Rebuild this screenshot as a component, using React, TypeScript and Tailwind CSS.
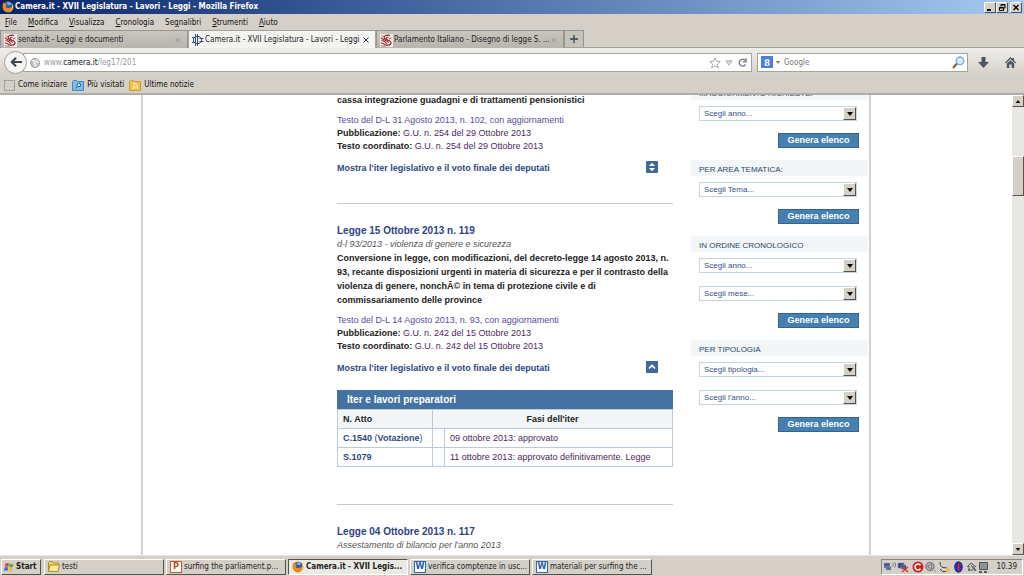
import type { ReactNode } from 'react';

const raised = 'border border-t-white border-l-white border-r-[#55524c] border-b-[#55524c] bg-[#d4d0c8]';

function FirefoxIcon() {
  return (
    <svg viewBox="0 0 12 12" className="size-3 shrink-0" aria-hidden="true">
      <circle cx="6" cy="6" r="5.4" fill="#e2701c" />
      <circle cx="6.4" cy="5" r="3.9" fill="#2d5fa8" />
      <path d="M5 1.6c1.6-.6 3.4 0 4.3 1.4L7 4.2 5.2 3z" fill="#7db4e6" />
      <path d="M.7 3.2C1 2.4 1.6 1.8 2 1.6c0 .8.5 1.3 1.2 1.5.5 0 1.3 0 1.7.3-.2.6-1 .9-1.2 1.5.2 1.6 1.7 2.6 3.4 2.2 1.3-.2 2-.8 3-1.3-.3 2.5-2 4.6-4.3 4.8C2.800 11 .3 8 .7 3.2z" fill="#ee8a1e" />
      <path d="M10.3 2.6c1.2 1.7 1.5 4 .3 6-.8 1.5-2.3 2.6-4 2.8 2.3-1.300 4-3.400 3.700-8.800z" fill="#f8c83a" />
    </svg>
  );
}

function SenateIcon() {
  return (
    <svg viewBox="0 0 13 13" className="size-[13px] shrink-0" fill="none" aria-hidden="true">
      <rect width="13" height="13" fill="#f4ecea" />
      <path d="M10 1.500C7 .8 4 1.500 4 3.500S10.500 6 11 8.500 8 11.500 6 11" stroke="#8c1c22" strokeWidth="1.200" />
      <path d="M8.500 3.500C6.500 2.800 6 4 7 4.800M1 3.500C2 6 7 6 8.500 8.500M1.500 6.500C4 7 6 8 6.500 9.800M1 9c2 0 3.500 1.500 5 2" stroke="#a02a2e" strokeWidth="1.200" />
      <path d="M1.500 1l2.500 2M11.500 4l-2.500 1M1 11.800c2 .4 3.500.6 5 .2" stroke="#b5575a" />
    </svg>
  );
}

function CameraIcon() {
  return (
    <svg viewBox="0 0 12 12" className="size-3 shrink-0" fill="none" stroke="#2f4f96" aria-hidden="true">
      <path d="M3.500 0v12M5.500 0v12M3.500 2.500h3.500c3.500 1 3.500 6 0 7H3.500M0 3.500h3.500M0 8.500h3.500M7.500 4.500h4M7.500 7.500h4M1.500 3.500v5" />
    </svg>
  );
}

function FolderIcon() {
  return (
    <svg viewBox="0 0 12 11" className="h-[11px] w-3 shrink-0" aria-hidden="true">
      <path d="M.5 9.500v-8L1.500.5h3l1 1.500h5v2" fill="#f2d16b" stroke="#b08a2b" />
      <path d="M.5 10.500L2 4h9.500L10 10.500z" fill="#fbe89a" stroke="#b08a2b" />
    </svg>
  );
}

function OfficeIcon({ kind }: { kind: 'P' | 'W' }) {
  const word = kind === 'W';
  return (
    <span
      className={`flex size-3 shrink-0 items-center justify-center border bg-white text-[9px] leading-none font-bold ${
        word ? 'border-[#2e69b3] text-[#1f5aa8]' : 'border-[#d0562c] text-[#cc4a1c]'
      }`}
      aria-hidden="true"
    >
      {kind}
    </span>
  );
}

function Tab({ icon, title, active = false }: { icon: ReactNode; title: string; active?: boolean }) {
  return (
    <div
      className={`flex h-[18px] w-[188px] items-center gap-px border border-b-0 pt-px pr-1.5 pl-[3px] ${
        active ? 'border-[#a5a29a] bg-[#f4f4f1]' : 'border-[#98958e] bg-linear-to-b from-[#cac6be] to-[#b8b5ae]'
      }`}
    >
      {icon}
      <button type="button" className="min-w-0 flex-1 overflow-hidden text-left whitespace-nowrap text-[#222]">
        {title}
      </button>
      <button type="button" aria-label={`Chiudi ${title}`} className={active ? 'text-[#333]' : 'text-[#999]'}>
        <svg viewBox="0 0 6 6" className="size-1.5" stroke="currentColor" aria-hidden="true">
          <path d="M.5.5l5 5M5.500.5l-5 5" />
        </svg>
      </button>
    </div>
  );
}

function Browser() {
  return (
    <header className="shrink-0 bg-[#d4d0c8]">
      <div className="flex h-[14px] items-center justify-between bg-linear-to-r from-[#0a246a] to-[#a6caf0] px-0.5">
        <div className="flex items-center gap-px font-bold text-white">
          <FirefoxIcon />
          Camera.it - XVII Legislatura - Lavori - Leggi - Mozilla Firefox
        </div>
        <div className="flex">
          <button type="button" aria-label="Riduci" className={`flex h-[11px] w-3 items-center justify-center ${raised}`}>
            <svg viewBox="0 0 8 7" className="h-[7px] w-2" aria-hidden="true">
              <path d="M1 5h4v2H1z" />
            </svg>
          </button>
          <button type="button" aria-label="Ripristina" className={`flex h-[11px] w-3 items-center justify-center ${raised}`}>
            <svg viewBox="0 0 8 7" className="h-[7px] w-2" fill="none" stroke="#000" aria-hidden="true">
              <path d="M3 2.500V.5h4v3.500H5.500M1.500 3.500h4v3h-4zM3 1h4M1.500 4h4" />
            </svg>
          </button>
          <button type="button" aria-label="Chiudi" className={`ml-0.5 flex h-[11px] w-3 items-center justify-center ${raised}`}>
            <svg viewBox="0 0 8 7" className="h-[7px] w-2" stroke="#000" strokeWidth="1.300" aria-hidden="true">
              <path d="M1.500 1l5 5M6.500 1l-5 5" />
            </svg>
          </button>
        </div>
      </div>

      <nav className="flex h-4 items-center gap-[11px] px-[5px] pt-0.5 text-[#111]">
        {['File', 'Modifica', 'Visualizza', 'Cronologia', 'Segnalibri', 'Strumenti', 'Aiuto'].map((m) => (
          <button key={m} type="button">
            {m === 'Segnalibri' ? (
              <>
                Se<u>g</u>nalibri
              </>
            ) : (
              <>
                <u>{m[0]}</u>
                {m.slice(1)}
              </>
            )}
          </button>
        ))}
      </nav>

      <div className="flex h-[18px] border-b border-[#a5a29a]">
        <Tab icon={<SenateIcon />} title="senato.it - Leggi e documenti" />
        <Tab icon={<CameraIcon />} title="Camera.it - XVII Legislatura - Lavori - Leggi" active />
        <Tab icon={<SenateIcon />} title="Parlamento Italiano - Disegno di legge S. ..." />
        <button
          type="button"
          aria-label="Nuova scheda"
          className="flex w-5 items-center justify-center border border-b-0 border-[#98958e] bg-[#c6c3bb]"
        >
          <svg viewBox="0 0 8 8" className="size-2" stroke="#33434f" strokeWidth="1.300" aria-hidden="true">
            <path d="M4 0v8M0 4h8" />
          </svg>
        </button>
      </div>

      <div className="flex h-7 items-center bg-linear-to-b from-[#efeeea] to-[#d4d0c8] pr-2 pl-1">
        <button
          type="button"
          aria-label="Indietro"
          className="z-10 flex size-[23px] shrink-0 items-center justify-center rounded-full border border-[#a09d96] bg-[#f6f5f3]"
        >
          <svg viewBox="0 0 12 10" className="h-[10px] w-3" fill="none" stroke="#3b4a56" strokeWidth="2.200" aria-hidden="true">
            <path d="M6 .8L1.800 5 6 9.200M2 5h10" />
          </svg>
        </button>
        <div className="-ml-1 flex h-[19px] flex-1 items-center gap-1 border border-[#a5a29a] bg-white pt-px pr-1 pl-1.5">
          <svg viewBox="0 0 10 10" className="size-[10px]" fill="none" stroke="#999" aria-hidden="true">
            <circle cx="5" cy="5" r="4.500" fill="#c9c9c9" />
            <path d="M2 2.500l3 .5-1 2 2 1.500L5 9M7 1.500l-.5 2 2.500 1" stroke="#fff" />
          </svg>
          <p className="flex-1 text-[#999]">
            www.<span className="text-[#111]">camera.it</span>/leg17/201
          </p>
          <button type="button" aria-label="Aggiungi ai segnalibri">
            <svg viewBox="0 0 12 12" className="size-3" fill="none" stroke="#aaa" aria-hidden="true">
              <path d="M6 .8l1.500 3.500 3.800.3-2.900 2.500.9 3.800L6 8.900l-3.300 2 .9-3.800L.7 4.600l3.800-.3z" />
            </svg>
          </button>
          <button type="button" aria-label="Cronologia indirizzi">
            <svg viewBox="0 0 8 6" className="h-1.5 w-2" fill="#ddd" stroke="#b0b0b0" aria-hidden="true">
              <path d="M.8.800h6.400L4 5.200z" />
            </svg>
          </button>
          <button type="button" aria-label="Ricarica" className="ml-px">
            <svg viewBox="0 0 9 9" className="size-[9px]" fill="none" stroke="#808890" strokeWidth="1.500" aria-hidden="true">
              <path d="M7.500 6.500A3.400 3.400 0 1 1 7 2.200M8 .3v3.400H4.800" />
            </svg>
          </button>
        </div>
        <div className="ml-[5px] flex h-[19px] w-[211px] items-center border border-[#a5a29a] bg-white pr-0.5 pl-[3px]">
          <span className="flex size-3 items-center justify-center bg-[#4a7fe0] font-['Liberation_Serif',serif] text-[11px] leading-none font-bold text-white">
            8
          </span>
          <svg viewBox="0 0 4 3" className="mx-[3px] h-[3px] w-1" aria-hidden="true">
            <path d="M0 0h4L2 3z" fill="#777" />
          </svg>
          <input
            type="text"
            aria-label="Cerca"
            placeholder="Google"
            className="ml-px min-w-0 flex-1 bg-transparent pt-px outline-none placeholder:text-[#777]"
          />
          <button type="button" aria-label="Avvia ricerca">
            <svg viewBox="0 0 13 13" className="size-[13px]" aria-hidden="true">
              <path d="M1 12l4-4.500" stroke="#8a5a33" strokeWidth="2" />
              <circle cx="8" cy="4.800" r="3.800" fill="#d3ebfb" stroke="#7ba6cf" strokeWidth="1.300" />
            </svg>
          </button>
        </div>
        <button type="button" aria-label="Download" className="ml-2.5">
          <svg viewBox="0 0 11 11" className="size-[11px]" fill="#4b5661" aria-hidden="true">
            <path d="M3.500 0h4v5H11L5.500 11 0 5h3.500z" />
          </svg>
        </button>
        <button type="button" aria-label="Pagina iniziale" className="ml-4">
          <svg viewBox="0 0 11 11" className="size-[11px]" fill="#4b5661" aria-hidden="true">
            <path d="M5.500 0L0 5.500l.8.900L5.500 2l4.700 4.400.8-.9-2-2V1H7.500v1zM1.800 6.500L5.500 3.200l3.700 3.300V11H6.700V7.500H4.300V11H1.800z" />
          </svg>
        </button>
      </div>

      <div className="flex h-[19px] items-center gap-[5px] border-b-2 border-[#b0ada6] px-1 pt-px text-[#111]">
        <a href="#iniziare" className="flex items-center gap-[3px]">
          <svg viewBox="0 0 11 11" className="size-[11px]" fill="none" stroke="#888" strokeDasharray="2 1" aria-hidden="true">
            <rect x=".5" y=".5" width="10" height="10" />
          </svg>
          Come iniziare
        </a>
        <a href="#visitati" className="flex items-center gap-[3px]">
          <svg viewBox="0 0 12 11" className="h-[11px] w-3" aria-hidden="true">
            <path d="M.5 10.500V1.500L1.500.5h3l1 1h6v9z" fill="#7dbdec" stroke="#3f86c4" />
            <circle cx="6.800" cy="5" r="1.800" fill="#cfe8fa" stroke="#1c5d9c" />
            <path d="M5.500 6.300L3.500 8.500" stroke="#1c5d9c" />
          </svg>
          Più visitati
        </a>
        <a href="#notizie" className="flex items-center gap-[3px]">
          <svg viewBox="0 0 12 11" className="h-[11px] w-3" aria-hidden="true">
            <path d="M.5 10.500V1.500L1.500.5h3l1 1h6v9z" fill="#f3c24c" stroke="#d29a2b" />
            <path d="M4 3.500c3 0 4.500 1.500 4.500 5M4 6c1.500 0 2.200.8 2.200 2.500" fill="none" stroke="#fff" />
            <circle cx="4.300" cy="8.200" r=".8" fill="#fff" />
          </svg>
          Ultime notizie
        </a>
      </div>
    </header>
  );
}

function LawTexts({ decree, gazette }: { decree: string; gazette: string }) {
  return (
    <div className="mt-[7px] leading-[13px] text-[#4b2860]">
      <p>
        <a href="#testo" className="text-[#5a4a9c]">
          Testo del D-L {decree}, con aggiornamenti
        </a>
      </p>
      <p>
        <strong className="text-[#222]">Pubblicazione:</strong> <a href="#gu">G.U. n. {gazette}</a>
      </p>
      <p>
        <strong className="text-[#222]">Testo coordinato:</strong> <a href="#coordinato">G.U. n. {gazette}</a>
      </p>
    </div>
  );
}

function IterToggle({ open = false }: { open?: boolean }) {
  return (
    <div className="mt-2 flex h-[14px] items-center justify-between pr-[15px]">
      <a href="#iter" className="font-bold text-[#2c4684]">
        Mostra l'iter legislativo e il voto finale dei deputati
      </a>
      <button type="button" aria-label="Mostra iter" aria-expanded={open} className="mb-0.5">
        <svg viewBox="0 0 12 12" className="size-3" aria-hidden="true">
          <rect width="12" height="12" rx={open ? 0 : 1} fill="#40699a" />
          {open ? (
            <path d="M3 7.500l3-3 3 3" fill="none" stroke="#fff" strokeWidth="1.700" />
          ) : (
            <path d="M3 5l3-3.200L9 5zM3 7l3 3.200L9 7z" fill="#fff" />
          )}
        </svg>
      </button>
    </div>
  );
}

function LawHeading({ title, subtitle }: { title: string; subtitle: string }) {
  return (
    <>
      <h2 className="mt-5 text-[10px] leading-[14px] font-bold text-[#2f4286]">
        <a href="#legge">{title}</a>
      </h2>
      <p className="leading-[13px] text-[#555] italic">{subtitle}</p>
    </>
  );
}

function Laws() {
  return (
    <main className="-mt-0.5 w-[336px] shrink-0">
      <article>
        <p className="leading-[14px] font-bold">cassa integrazione guadagni e di trattamenti pensionistici</p>
        <LawTexts decree="31 Agosto 2013, n. 102" gazette="254 del 29 Ottobre 2013" />
        <IterToggle />
      </article>
      <hr className="mt-7 border-[#c6cacc]" />

      <article>
        <LawHeading title="Legge 15 Ottobre 2013 n. 119" subtitle="d-l 93/2013 - violenza di genere e sicurezza" />
        <p className="leading-[14px] font-bold">
          Conversione in legge, con modificazioni, del decreto-legge 14 agosto 2013, n. 93, recante disposizioni urgenti
          in materia di sicurezza e per il contrasto della violenza di genere, nonchÃ© in tema di protezione civile e di
          commissariamento delle province
        </p>
        <LawTexts decree="14 Agosto 2013, n. 93" gazette="242 del 15 Ottobre 2013" />
        <IterToggle open />
        <table className="mt-[15px] w-full border-collapse text-left [&_td]:border [&_td]:border-[#bccbdc] [&_td]:px-[5px] [&_tr]:h-[19px]">
          <caption className="h-[19px] bg-[#4372a3] px-2.5 text-left text-[10px] leading-[19px] font-bold text-white">
            Iter e lavori preparatori
          </caption>
          <thead className="bg-[#f3f6f9]">
            <tr>
              <th className="w-[95px] border border-[#bccbdc] px-[5px]">N. Atto</th>
              <th colSpan={2} className="border border-[#bccbdc] text-center">
                Fasi dell'iter
              </th>
            </tr>
          </thead>
          <tbody className="text-[#4b2860]">
            <tr>
              <td className="text-[#2c4684]">
                <a href="#c1540" className="font-bold">
                  C.1540
                </a>{' '}
                (
                <a href="#votazione" className="font-bold">
                  Votazione
                </a>
                )
              </td>
              <td className="w-3" />
              <td>09 ottobre 2013: approvato</td>
            </tr>
            <tr>
              <td>
                <a href="#s1079" className="font-bold text-[#2c4684]">
                  S.1079
                </a>
              </td>
              <td />
              <td>11 ottobre 2013: approvato definitivamente. Legge</td>
            </tr>
          </tbody>
        </table>
      </article>
      <hr className="mt-[37px] border-[#c6cacc]" />

      <article>
        <LawHeading title="Legge 04 Ottobre 2013 n. 117" subtitle="Assestamento di bilancio per l'anno 2013" />
      </article>
    </main>
  );
}

function FilterGroup({ title, options }: { title: string; options: string[] }) {
  return (
    <form className="mb-3" onSubmit={(e) => e.preventDefault()}>
      <h3 className="h-4 bg-[#f3f6f9] px-2 text-[8px] leading-[20px] text-[#2e4668]">{title}</h3>
      <div className="mt-1.5 flex flex-col gap-[13px] pr-[11px] pl-2">
        {options.map((o) => (
          <div key={o} className="relative">
            <select
              aria-label={`${title} ${o}`}
              className="block h-[15px] w-full appearance-none border border-[#c8d6e4] bg-white pl-1 text-[8px] leading-[13px] text-[#3d4b86]"
            >
              <option>{o}</option>
            </select>
            <span
              className={`pointer-events-none absolute top-px right-px flex size-[13px] items-center justify-center ${raised}`}
            >
              <svg viewBox="0 0 6 4" className="h-1 w-1.5" aria-hidden="true">
                <path d="M0 0h6L3 4z" />
              </svg>
            </span>
          </div>
        ))}
      </div>
      <button
        type="submit"
        className="mt-3 mr-[9px] ml-auto block h-[15px] w-[81px] border border-[#36648f] bg-[#4680b2] text-[9px] leading-[13px] font-bold text-white"
      >
        Genera elenco
      </button>
    </form>
  );
}

function Scrollbar() {
  return (
    <div className="flex w-3 shrink-0 flex-col bg-[#e9e7e3]" aria-hidden="true">
      <div className={`flex h-3 items-center justify-center ${raised}`}>
        <svg viewBox="0 0 6 4" className="h-[3px] w-1.5">
          <path d="M0 4h6L3 0z" />
        </svg>
      </div>
      <div className={`mt-[49px] h-10 ${raised}`} />
      <div className={`mt-auto flex h-3 items-center justify-center ${raised}`}>
        <svg viewBox="0 0 6 4" className="h-[3px] w-1.5">
          <path d="M0 0h6L3 4z" />
        </svg>
      </div>
    </div>
  );
}

function Task({ icon, label, active = false }: { icon: ReactNode; label: string; active?: boolean }) {
  return (
    <button
      type="button"
      className={`flex h-4 w-[120px] items-center gap-0.5 border px-[3px] ${
        active
          ? 'border-t-[#55524c] border-r-white border-b-white border-l-[#55524c] bg-[#ebe9e4] font-bold'
          : 'border-t-white border-r-[#55524c] border-b-[#55524c] border-l-white bg-[#d4d0c8]'
      }`}
    >
      {icon}
      <span className="whitespace-nowrap">{label}</span>
    </button>
  );
}

function Tray() {
  return (
    <div className="ml-auto flex h-4 items-center gap-0.5 border border-t-[#8a877f] border-r-white border-b-white border-l-[#8a877f] pr-[5px] pl-0.5">
      <svg viewBox="0 0 104 12" className="h-3 w-[104px]" fill="none" aria-hidden="true">
        <path d="M0 2h6v5H0zM2 5h5v4H2z" fill="#3c4f86" stroke="#a7b2cc" strokeWidth=".6" />
        <path d="M8.500 2c1 1.200 1 2.500 0 3.700M10.500 1c1.500 2 1.500 4 0 5.700" stroke="#666" strokeWidth=".8" />
        <path d="M14 2h6v5h-6zM17 4h5v4h-5z" fill="#2f4277" stroke="#8592b5" strokeWidth=".6" />
        <path d="M18 6l6 5M24 6l-6 5" stroke="#d8352a" strokeWidth="1.500" />
        <circle cx="34" cy="6" r="5.500" fill="#cf1f24" />
        <path d="M36.500 4.200a3 3 0 1 0 0 3.600" stroke="#fff" strokeWidth="1.600" />
        <circle cx="46" cy="5.500" r="4.200" fill="#a9abb0" stroke="#6a6d74" />
        <path d="M44 5h1.500l2-2v5l-2-2H44zM50 9l1.500 1.500" fill="#eee" stroke="#555" strokeWidth=".7" />
        <path d="M56 1c0 3 1 5 3 5.500l4 .5c1.500.5 1 3-.5 3.500h-4L56 8" stroke="#444" />
        <path d="M62 7h3.500v4H62z" fill="#e5c437" />
        <ellipse cx="74.500" cy="6" rx="4.300" ry="5.800" fill="#182ca8" />
        <path d="M72.500 3.800l4 4-2 2v-8l2 2-4 4" stroke="#d8263a" />
        <path d="M83 6l4-4 5 4M85 5v5M87 4l4 6M84 9h5M89 5l3 5" stroke="#4f4f55" />
        <path d="M95.500 1.500h8v7h-8z" fill="#8b9298" stroke="#4e5357" />
        <path d="M95 11h3M100 11h3" stroke="#333" strokeWidth="1.500" />
      </svg>
      <span className="ml-1.5">10.39</span>
    </div>
  );
}

export default function App() {
  return (
    <div className="flex h-screen flex-col overflow-hidden bg-white font-['DejaVu_Sans_Condensed','DejaVu_Sans',sans-serif] text-[8px] leading-[12px] text-[#222]">
      <Browser />

      <div className="flex min-h-0 flex-1">
        <div className="min-w-0 flex-1 overflow-hidden font-['Liberation_Sans',Arial,sans-serif] text-[9px]">
          <div className="mx-auto flex h-full w-[730px] max-w-full justify-end gap-[18px] border-x-2 border-[#d2d2d4] pr-px">
            <Laws />
            <aside className="-mt-[11px] w-[177px] shrink-0">
              <FilterGroup title="MAGGIORMENTE RICHIESTE:" options={['Scegli anno...']} />
              <FilterGroup title="PER AREA TEMATICA:" options={['Scegli Tema...']} />
              <FilterGroup title="IN ORDINE CRONOLOGICO" options={['Scegli anno...', 'Scegli mese...']} />
              <FilterGroup title="PER TIPOLOGIA" options={['Scegli tipologia...', "Scegli l'anno..."]} />
            </aside>
          </div>
        </div>
        <Scrollbar />
      </div>

      <footer className="flex h-[21px] shrink-0 items-center gap-0.5 border-t border-[#e8e6e1] bg-[#d4d0c8] px-px pt-px">
        <button type="button" className={`mr-px flex h-4 w-10 items-center gap-0.5 px-0.5 font-bold ${raised}`}>
          <svg viewBox="0 0 10 10" className="size-[10px] shrink-0" aria-hidden="true">
            <path d="M1.500 1.500Q3 .5 5 1.500L4.300 4.800Q2.500 4 .8 4.800z" fill="#d8482c" />
            <path d="M5.600 1.600Q7.500 2.500 9.500 1.500L8.800 5Q7 5.800 5 5z" fill="#5fa83c" />
            <path d="M.7 5.400Q2.500 4.600 4.200 5.400L3.500 8.800Q2 8 0 8.800z" fill="#3c6fc4" />
            <path d="M4.900 5.700Q7 6.500 8.700 5.600L8 9Q6 9.800 4.200 9z" fill="#edc02f" />
          </svg>
          Start
        </button>
        <Task icon={<FolderIcon />} label="testi" />
        <Task icon={<OfficeIcon kind="P" />} label="surfing the parliament.p..." />
        <Task icon={<FirefoxIcon />} label="Camera.it - XVII Legis..." active />
        <Task icon={<OfficeIcon kind="W" />} label="verifica comptenze in usc..." />
        <Task icon={<OfficeIcon kind="W" />} label="materiali per surfing the ..." />
        <Tray />
      </footer>
    </div>
  );
}
